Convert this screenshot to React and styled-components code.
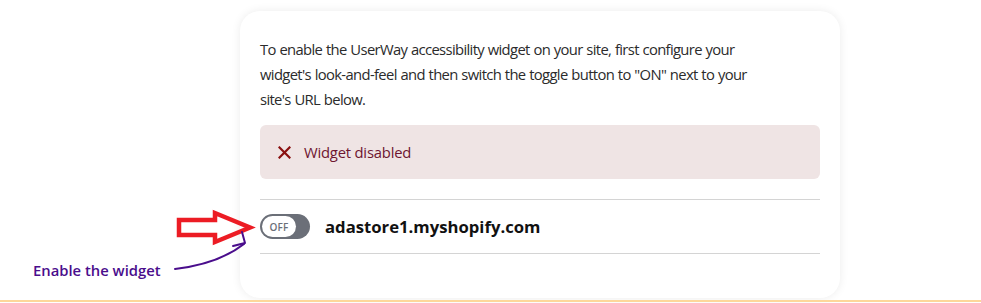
import React from "react"
import styled, { createGlobalStyle } from "styled-components"

const GlobalStyle = createGlobalStyle`
  html, body {
    margin: 0;
    padding: 0;
    background: #ffffff;
  }
  body {
    font-family: "Open Sans", "Noto Sans", sans-serif;
  }
`

const Page = styled.div`
  position: relative;
  width: 981px;
  height: 303px;
  overflow: hidden;
  background: #ffffff;
  display: flex;
  flex-direction: column;
`

const Stage = styled.div`
  flex: 1;
  padding: 11px 0 0 240px;
  display: flex;
  align-items: flex-start;
`

const Card = styled.section`
  width: 600px;
  height: 287px;
  box-sizing: border-box;
  background: #ffffff;
  border-radius: 20px;
  box-shadow: 0 0 10px 0 rgba(0, 0, 0, 0.08);
  padding: 26px 20px 0 20px;
  display: flex;
  flex-direction: column;
`

const Intro = styled.p`
  margin: 0;
  font-size: 14.8px;
  line-height: 25px;
  color: #2b2b2b;
  letter-spacing: -0.65px;
  word-spacing: 0.5px;
  white-space: nowrap;
`

const Alert = styled.div`
  margin-top: 13px;
  height: 54px;
  border-radius: 6px;
  background: #efe4e4;
  display: flex;
  align-items: center;
  padding: 0 18px;
  gap: 13px;
  color: #6e1530;
  font-size: 14.8px;
  letter-spacing: -0.2px;
`

const Divider = styled.hr`
  margin: ${(p) => p.$top || 0}px 0 0 0;
  border: 0;
  border-top: 1px solid #d4d4d4;
`

const SiteRow = styled.div`
  height: 53px;
  display: flex;
  align-items: center;
  gap: 15px;
`

const Toggle = styled.div`
  width: 50px;
  height: 25px;
  border-radius: 13px;
  background: #6b6f78;
  box-sizing: border-box;
  padding: 2px;
  display: flex;
`

const Knob = styled.span`
  width: 34px;
  height: 21px;
  border-radius: 11px;
  background: #ffffff;
  display: flex;
  align-items: center;
  justify-content: center;
  font-size: 10px;
  font-weight: 600;
  color: #6b6f78;
  letter-spacing: 0.2px;
`

const Domain = styled.span`
  font-size: 16.7px;
  font-weight: 700;
  color: #111111;
`

const BottomLine = styled.div`
  height: 2px;
  background: #fdd79a;
  margin-bottom: 1px;
`

const Overlay = styled.svg`
  position: absolute;
  left: 0;
  top: 0;
  pointer-events: none;
`

const Note = styled.span`
  position: absolute;
  left: 33px;
  top: 260px;
  font-size: 14.8px;
  font-weight: 600;
  color: #4a0d8c;
`

export default function App() {
  return (
    <Page>
      <GlobalStyle />
      <Stage>
        <Card>
          <Intro>
            To enable the UserWay accessibility widget on your site, first configure your
            <br />
            widget's look-and-feel and then switch the toggle button to "ON" next to your
            <br />
            site's URL below.
          </Intro>
          <Alert>
            <svg width="13" height="13" viewBox="0 0 13 13">
              <path d="M1.5 1.5 L11.5 11.5 M11.5 1.5 L1.5 11.5" stroke="#8a1010" strokeWidth="2.2" strokeLinecap="square" />
            </svg>
            Widget disabled
          </Alert>
          <Divider $top={20} />
          <SiteRow>
            <Toggle>
              <Knob>OFF</Knob>
            </Toggle>
            <Domain>adastore1.myshopify.com</Domain>
          </SiteRow>
          <Divider />
        </Card>
      </Stage>
      <BottomLine />
      <Overlay width="981" height="303" viewBox="0 0 981 303">
        <path
          d="M179 220 L215 220 L215 213 L250 227.5 L215 242 L215 235 L179 235 Z"
          fill="none"
          stroke="#ec1c24"
          strokeWidth="4.5"
          strokeLinejoin="miter"
        />
        <path
          d="M175 269 C200 266 226 258 244 244"
          fill="none"
          stroke="#4a0d8c"
          strokeWidth="2"
          strokeLinecap="round"
        />
        <path
          d="M233 246 L245 243 L242 232"
          fill="none"
          stroke="#4a0d8c"
          strokeWidth="2"
          strokeLinecap="round"
          strokeLinejoin="round"
        />
      </Overlay>
      <Note>Enable the widget</Note>
    </Page>
  )
}
